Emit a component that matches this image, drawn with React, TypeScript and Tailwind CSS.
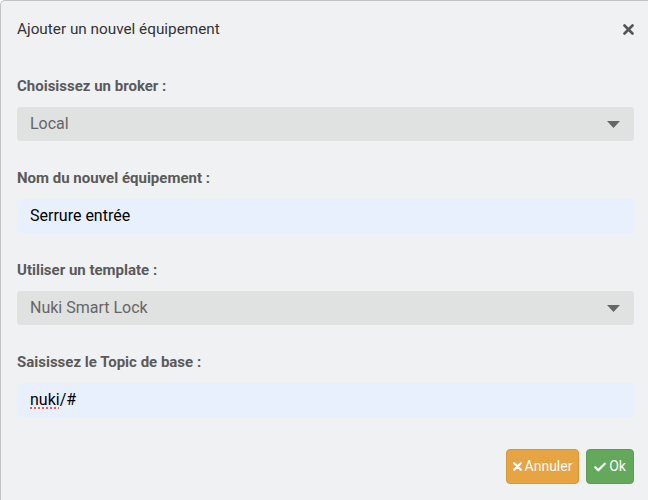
import React from "react";

function Caret() {
  return (
    <svg width="13" height="7" viewBox="0 0 13 7" className="absolute right-[14px] top-[14px]">
      <path d="M0 0 L13 0 L6.5 7 Z" fill="#666" />
    </svg>
  );
}

function Label({ children }: { children: React.ReactNode }) {
  return <div className="h-[20px] leading-[20px] text-[15px] font-bold text-[#5a5a5a] mb-[11px]">{children}</div>;
}

function SelectBox({ value }: { value: string }) {
  return (
    <div className="relative h-[34px] rounded-[4px] bg-[#e0e1e1] pl-[13px] flex items-center text-[16px] text-[#666]">
      {value}
      <Caret />
    </div>
  );
}

function InputBox({ children }: { children: React.ReactNode }) {
  return (
    <div className="h-[34px] rounded-[4px] bg-[#e8f0fe] pl-[13px] flex items-center text-[16px] text-black">
      {children}
    </div>
  );
}

export default function App() {
  return (
    <div className="w-[648px] h-[500px] bg-white overflow-hidden" style={{ fontFamily: "Roboto, 'Noto Sans', sans-serif" }}>
      <div className="w-[660px] h-[520px] bg-[#f0f1f3] border-l border-t border-[#c4c4c4] rounded-tl-[5px]">
        <div className="h-[75px] pl-[16px] pr-[28px] flex items-start pt-[18px] justify-between" style={{ width: 647 }}>
          <div className="text-[15.3px] leading-[20px] text-[#333]">Ajouter un nouvel équipement</div>
          <svg width="11" height="11" viewBox="0 0 11 11" className="mt-[5px] -mr-[14px]">
            <path d="M1.5 1.5 L9.5 9.5 M9.5 1.5 L1.5 9.5" stroke="#555" strokeWidth="2.6" strokeLinecap="round" />
          </svg>
        </div>
        <div className="pl-[16px] flex flex-col" style={{ width: 633 }}>
          <div className="mb-[27px]">
            <Label>Choisissez un broker :</Label>
            <SelectBox value="Local" />
          </div>
          <div className="mb-[27px]">
            <Label>Nom du nouvel équipement :</Label>
            <InputBox>Serrure entrée</InputBox>
          </div>
          <div className="mb-[27px]">
            <Label>Utiliser un template :</Label>
            <SelectBox value="Nuki Smart Lock" />
          </div>
          <div>
            <Label>Saisissez le Topic de base :</Label>
            <InputBox>
              <span className="underline decoration-dotted decoration-[#e53935] underline-offset-[3px]">nuki</span>/#
            </InputBox>
          </div>
          <div className="flex justify-end gap-[7px] mt-[32px]">
            <button className="h-[35px] w-[73px] justify-center rounded-[4px] bg-[#e6a443] border border-[#d8963a] text-white text-[14px] flex items-center gap-[3px]">
              <svg width="9" height="9" viewBox="0 0 9 9">
                <path d="M1.2 1.2 L7.8 7.8 M7.8 1.2 L1.2 7.8" stroke="#fff" strokeWidth="2.2" strokeLinecap="round" />
              </svg>
              Annuler
            </button>
            <button className="h-[35px] w-[48px] justify-center rounded-[4px] bg-[#63a85b] border border-[#58a050] text-white text-[14px] flex items-center gap-[3px]">
              <svg width="12" height="10" viewBox="0 0 12 10">
                <path d="M1.3 5.3 L4.3 8.3 L10.7 1.7" stroke="#fff" strokeWidth="2.3" fill="none" strokeLinecap="round" strokeLinejoin="round" />
              </svg>
              Ok
            </button>
          </div>
        </div>
      </div>
    </div>
  );
}
